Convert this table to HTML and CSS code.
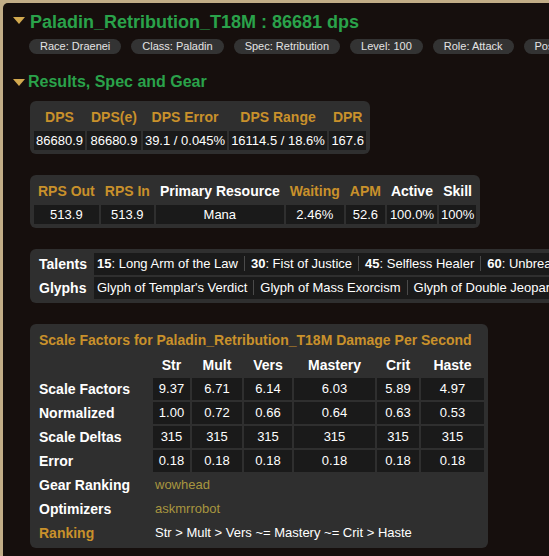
FILE: index.html
```html
<!DOCTYPE html>
<html>
<head>
<meta charset="utf-8">
<title>Paladin_Retribution_T18M</title>
<link rel="stylesheet" href="styles.css">
</head>
<body>
<div class="panel">
  <h2 class="player-title"><span class="tri tri-title"></span>Paladin_Retribution_T18M : 86681 dps</h2>
  <ul class="params">
    <li>Race: Draenei</li>
    <li>Class: Paladin</li>
    <li>Spec: Retribution</li>
    <li>Level: 100</li>
    <li>Role: Attack</li>
    <li>Position: back</li>
  </ul>
  <h3 class="section-title"><span class="tri tri-section"></span>Results, Spec and Gear</h3>

  <div class="box">
    <table class="stats">
      <tr><th>DPS</th><th>DPS(e)</th><th>DPS Error</th><th>DPS Range</th><th>DPR</th></tr>
      <tr><td>86680.9</td><td>86680.9</td><td>39.1 / 0.045%</td><td>16114.5 / 18.6%</td><td>167.6</td></tr>
    </table>
  </div>

  <div class="box">
    <table class="stats">
      <tr><th>RPS Out</th><th>RPS In</th><th class="white">Primary Resource</th><th>Waiting</th><th>APM</th><th class="white">Active</th><th class="white">Skill</th></tr>
      <tr><td>513.9</td><td>513.9</td><td>Mana</td><td>2.46%</td><td>52.6</td><td>100.0%</td><td>100%</td></tr>
    </table>
  </div>

  <div class="box">
    <table class="talents">
      <tr>
        <th>Talents</th>
        <td><b>15</b>: Long Arm of the Law<span class="sep"></span><b>30</b>: Fist of Justice<span class="sep"></span><b>45</b>: Selfless Healer<span class="sep"></span><b>60</b>: Unbreakable Spirit<span class="sep"></span><b>75</b>: Divine Purpose<span class="sep"></span><b>90</b>: Light's Hammer<span class="sep"></span><b>100</b>: Empowered Seals</td>
      </tr>
      <tr>
        <th>Glyphs</th>
        <td>Glyph of Templar's Verdict<span class="sep"></span>Glyph of Mass Exorcism<span class="sep"></span>Glyph of Double Jeopardy<span class="sep"></span>Glyph of Fire From the Heavens<span class="sep"></span>Glyph of the Righteous Retreat</td>
      </tr>
    </table>
  </div>

  <div class="box">
    <table class="scale">
      <tr><th colspan="7" class="scale-caption">Scale Factors for Paladin_Retribution_T18M Damage Per Second</th></tr>
      <tr>
        <th class="c-label"></th>
        <th class="c-str">Str</th>
        <th class="c-mult">Mult</th>
        <th class="c-vers">Vers</th>
        <th class="c-mastery">Mastery</th>
        <th class="c-crit">Crit</th>
        <th class="c-haste">Haste</th>
      </tr>
      <tr><th class="row-label">Scale Factors</th><td>9.37</td><td>6.71</td><td>6.14</td><td>6.03</td><td>5.89</td><td>4.97</td></tr>
      <tr><th class="row-label">Normalized</th><td>1.00</td><td>0.72</td><td>0.66</td><td>0.64</td><td>0.63</td><td>0.53</td></tr>
      <tr><th class="row-label">Scale Deltas</th><td>315</td><td>315</td><td>315</td><td>315</td><td>315</td><td>315</td></tr>
      <tr><th class="row-label">Error</th><td>0.18</td><td>0.18</td><td>0.18</td><td>0.18</td><td>0.18</td><td>0.18</td></tr>
      <tr><th class="row-label">Gear Ranking</th><td colspan="6" class="plain"><a class="link" href="#">wowhead</a></td></tr>
      <tr><th class="row-label">Optimizers</th><td colspan="6" class="plain"><a class="link" href="#">askmrrobot</a></td></tr>
      <tr><th class="row-label rank-label">Ranking</th><td colspan="6" class="plain">Str &gt; Mult &gt; Vers ~= Mastery ~= Crit &gt; Haste</td></tr>
    </table>
  </div>
</div>
</body>
</html>
```
FILE: styles.css
```css
html, body {
  margin: 0;
  padding: 0;
  overflow: hidden;
}

body {
  background: #c2ad87;
  font-family: "Liberation Sans", Arial, sans-serif;
  padding: 3px 0 0 3px;
  height: 553px;
}

.panel {
  width: 1100px;
  min-height: 700px;
  background: #160f0d;
  border-radius: 5px 0 0 0;
  padding: 9px 10px 0;
  color: #fff;
}

.player-title {
  margin: 0;
  font-size: 18px;
  font-weight: bold;
  line-height: 21px;
  color: #2aa24a;
  white-space: nowrap;
}

.tri {
  display: inline-block;
  width: 0;
  height: 0;
  border-left: 6px solid transparent;
  border-right: 6px solid transparent;
  border-top: 7px solid #d2a94f;
}

.tri-title {
  margin-right: 5px;
  vertical-align: 4px;
}

.tri-section {
  margin-right: 3px;
  vertical-align: 1px;
}

.params {
  list-style: none;
  margin: 6px 0 0 16px;
  padding: 0;
  display: flex;
  gap: 10px;
}

.params li {
  background: #333333;
  color: #e4e4e4;
  font-size: 11px;
  line-height: 13px;
  padding: 1px 11px;
  border-radius: 8px;
  white-space: nowrap;
}

.section-title {
  margin: 19px 0 0;
  font-size: 16px;
  font-weight: bold;
  line-height: 18px;
  color: #2aa24a;
  white-space: nowrap;
}

.box {
  width: max-content;
  margin: 10px 0 0 17px;
  background: #2f2f2f;
  border-radius: 6px;
  padding: 2px;
}

.box + .box {
  margin-top: 21px;
}

table {
  border-collapse: separate;
  border-spacing: 2px;
}

th {
  font-size: 14px;
  font-weight: bold;
  line-height: 16px;
  color: #fff;
}

td {
  font-size: 13px;
  line-height: 15px;
  color: #fff;
  background: #1a1a1a;
  text-align: center;
  white-space: nowrap;
}

.stats th {
  padding: 4px;
  color: #c9912b;
  text-align: center;
  white-space: nowrap;
}

.stats th.white {
  color: #fff;
}

.stats td {
  padding: 2px;
}

.talents th {
  padding: 3px 5px;
  text-align: left;
}

.talents td {
  padding: 3px 3px;
  line-height: 16px;
  text-align: left;
}

.talents b {
  font-weight: bold;
}

.sep {
  display: inline-block;
  width: 1px;
  height: 15px;
  background: #4a4a4a;
  margin: 0 6px;
  vertical-align: -3px;
}

.scale th {
  padding: 3px 4px;
  text-align: center;
  box-sizing: border-box;
}

.scale td {
  padding: 3px 4px;
  line-height: 16px;
}

.scale th.scale-caption {
  padding: 4px 5px;
  text-align: left;
  color: #c9912b;
  white-space: nowrap;
}

.scale th.row-label {
  text-align: left;
  padding: 3px 5px;
  white-space: nowrap;
}

.scale th.rank-label {
  color: #c9912b;
}

.c-label { width: 117px; }
.c-str { width: 37px; }
.c-mult { width: 50px; }
.c-vers { width: 48px; }
.c-mastery { width: 81px; }
.c-crit { width: 42px; }
.c-haste { width: 63px; }

.scale td.plain {
  background: transparent;
  text-align: left;
  padding-left: 2px;
}

.link {
  color: #a8963f;
  text-decoration: none;
}
```
